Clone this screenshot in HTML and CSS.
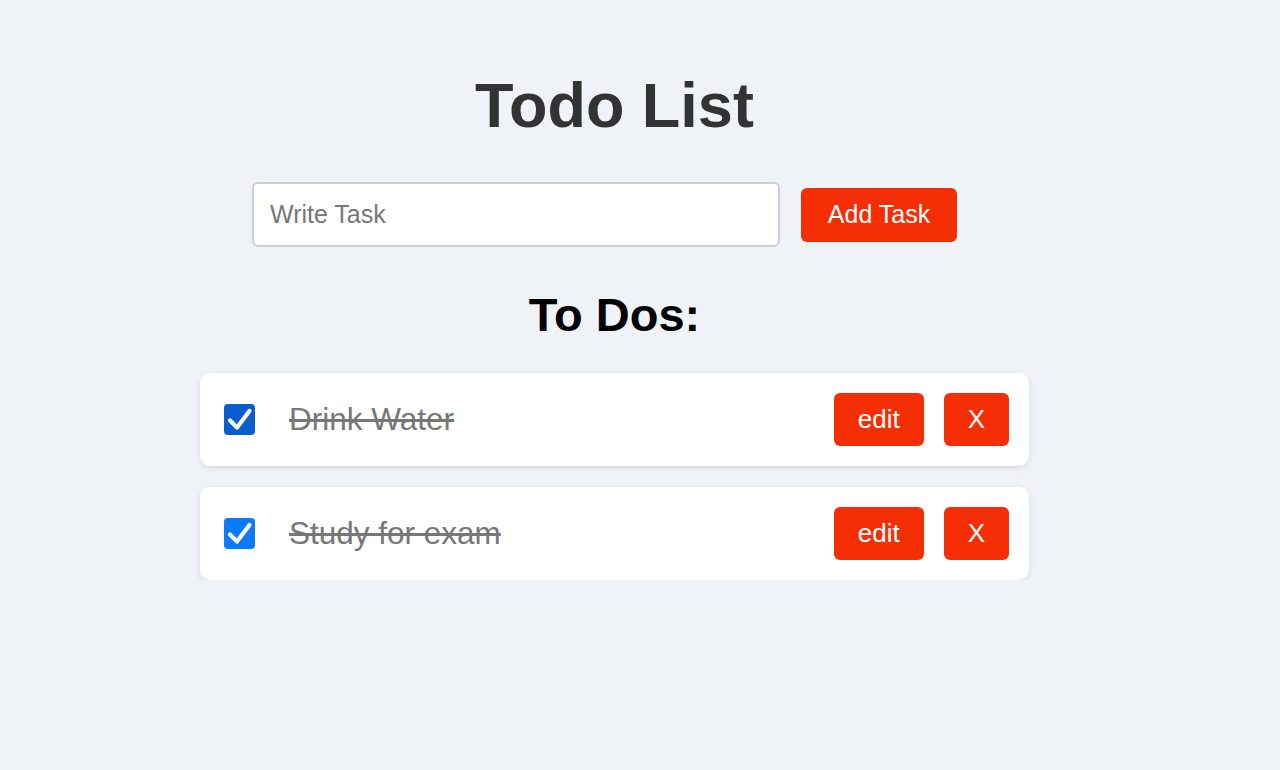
FILE: index.html
```html
<!DOCTYPE html>
<html lang="en">
<head>
<meta charset="utf-8">
<title>Todo List</title>
<link rel="stylesheet" href="styles.css">
</head>
<body>
<main class="page">
  <h1 class="title">Todo List</h1>
  <div class="add-row">
    <input class="task-input" type="text" placeholder="Write Task">
    <button class="btn btn-add">Add Task</button>
  </div>
  <h2 class="subtitle">To Dos:</h2>
  <ul class="list">
    <li class="card">
      <span class="check check-dark"><svg viewBox="0 0 31 31" width="31" height="31"><path d="M6 16.5 L13 23.5 L25.5 7" fill="none" stroke="#fff" stroke-width="4.2" stroke-linecap="round" stroke-linejoin="round"/></svg></span>
      <span class="task done">Drink Water</span>
      <div class="actions">
        <button class="btn btn-small">edit</button>
        <button class="btn btn-small">X</button>
      </div>
    </li>
    <li class="card">
      <span class="check"><svg viewBox="0 0 31 31" width="31" height="31"><path d="M6 16.5 L13 23.5 L25.5 7" fill="none" stroke="#fff" stroke-width="4.2" stroke-linecap="round" stroke-linejoin="round"/></svg></span>
      <span class="task done">Study for exam</span>
      <div class="actions">
        <button class="btn btn-small">edit</button>
        <button class="btn btn-small">X</button>
      </div>
    </li>
  </ul>
</main>
</body>
</html>
```

FILE: styles.css
```css
html, body {
  margin: 0;
  padding: 0;
  background: #eff2f7;
  font-family: "Liberation Sans", Arial, Helvetica, sans-serif;
}

.page {
  width: 1229px;
  padding-top: 69px;
  display: flex;
  flex-direction: column;
  align-items: center;
}

.title {
  margin: 0;
  font-size: 63px;
  line-height: 72px;
  font-weight: 700;
  color: #333333;
}

.add-row {
  margin-top: 41px;
  display: flex;
  align-items: center;
}

.task-input {
  box-sizing: border-box;
  width: 528px;
  height: 65px;
  border: 2px solid #cfd0d4;
  border-radius: 6px;
  padding: 0 16px;
  font-family: inherit;
  font-size: 25px;
  color: #333;
  background: #fff;
  outline: none;
}

.task-input::placeholder {
  color: #777777;
}

.btn {
  border: none;
  background: #f52e06;
  color: #ffffff;
  font-family: inherit;
  border-radius: 6px;
  cursor: pointer;
}

.btn-add {
  box-sizing: border-box;
  width: 156px;
  height: 54px;
  padding: 0;
  font-size: 25px;
  margin: 0 20px 0 21px;
}

.subtitle {
  margin: 41px 0 0;
  font-size: 47px;
  line-height: 54px;
  font-weight: 700;
  color: #000000;
}

.list {
  list-style: none;
  margin: 31px 0 0;
  padding: 0;
  display: flex;
  flex-direction: column;
  gap: 21px;
}

.card {
  box-sizing: border-box;
  width: 829px;
  height: 93px;
  padding: 20px 20px 20px 24px;
  background: #ffffff;
  border-radius: 10px;
  box-shadow: 0 2px 6px rgba(0, 0, 0, 0.1);
  display: flex;
  align-items: center;
}

.check {
  width: 31px;
  height: 31px;
  border-radius: 4px;
  background: #0a7bff;
  display: flex;
  flex: none;
}

.check-dark {
  background: #0b5ccc;
}

.task {
  margin-left: 34px;
  font-size: 31.5px;
  color: #777777;
  flex: 1;
}

.done {
  text-decoration: line-through;
}

.actions {
  display: flex;
  gap: 20px;
}

.btn-small {
  height: 53px;
  padding: 0 24px;
  font-size: 26px;
}
```
